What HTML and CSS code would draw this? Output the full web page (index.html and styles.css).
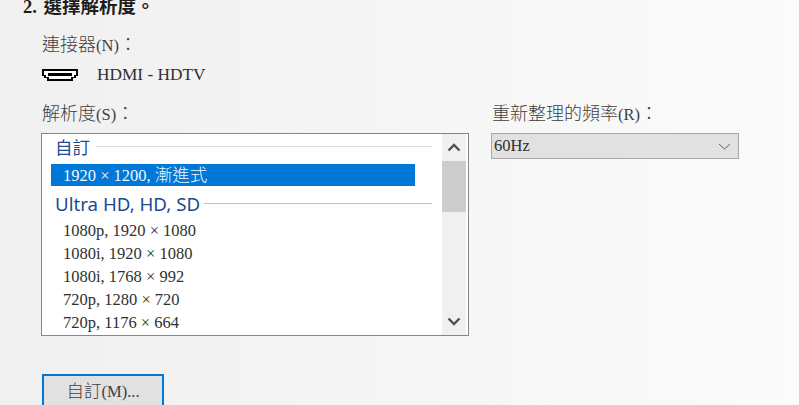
FILE: index.html
```html
<!DOCTYPE html>
<html lang="zh-Hant">
<head>
<meta charset="utf-8">
<title>選擇解析度</title>
<link rel="stylesheet" href="styles.css">
</head>
<body>
<main class="page">
  <h2 class="step">2. 選擇解析度。</h2>
  <div class="section">
    <div class="label">連接器<span class="latin">(N)</span>：</div>
    <div class="connector">
      <svg class="hdmi" width="36" height="12" viewBox="0 0 36 12" aria-hidden="true" shape-rendering="crispEdges">
        <path d="M0 0h36v7h-2v2h-3v3H5V9H2V7H0z" fill="#000"/>
        <path d="M2 2h32v4h-2v2h-3v2H7V8H4V6H2z" fill="#fff"/>
        <path d="M6 4h24v3H6z" fill="#000"/>
      </svg>
      <span>HDMI - HDTV</span>
    </div>
    <div class="columns">
      <div class="col-left">
        <div class="label">解析度<span class="latin">(S)</span>：</div>
        <div class="listbox">
          <div class="list">
            <div class="group first"><span>自訂</span></div>
            <div class="item selected">1920 × 1200, <span class="cjk">漸進式</span></div>
            <div class="group second"><span>Ultra HD, HD, SD</span></div>
            <div class="item">1080p, 1920 × 1080</div>
            <div class="item">1080i, 1920 × 1080</div>
            <div class="item">1080i, 1768 × 992</div>
            <div class="item">720p, 1280 × 720</div>
            <div class="item">720p, 1176 × 664</div>
          </div>
          <div class="scrollbar">
            <div class="arrow">
              <svg width="14" height="9" viewBox="0 0 14 9" aria-hidden="true"><path d="M1.500 7.500L7 2l5.500 5.500" fill="none" stroke="#505050" stroke-width="2.400"/></svg>
            </div>
            <div class="thumb"></div>
            <div class="track"></div>
            <div class="arrow down">
              <svg width="14" height="9" viewBox="0 0 14 9" aria-hidden="true"><path d="M1.500 1.500L7 7l5.500-5.500" fill="none" stroke="#505050" stroke-width="2.400"/></svg>
            </div>
          </div>
        </div>
      </div>
      <div class="col-right">
        <div class="label">重新整理的頻率<span class="latin">(R)</span>：</div>
        <div class="combo">
          <span>60Hz</span>
          <svg width="13" height="7" viewBox="0 0 13 7" aria-hidden="true"><path d="M1 1l5.500 5L12 1" fill="none" stroke="#606060" stroke-width="1"/></svg>
        </div>
      </div>
    </div>
    <button class="button" type="button">自訂<span class="latin">(M)...</span></button>
  </div>
</main>
</body>
</html>
```
FILE: styles.css
```css
html, body {
  margin: 0;
  padding: 0;
  height: 405px;
  overflow: hidden;
  background: #f0f0f0;
}
body {
  font-family: "Liberation Serif", "Noto Sans CJK TC", serif;
  font-size: 17px;
  font-weight: 300;
  color: #303030;
}
.page {
  height: 405px;
  overflow: hidden;
  background: linear-gradient(90deg, #f0f0f0 0, #fbfbfb 100%);
}
.step {
  margin: 0;
  padding-left: 23px;
  height: 13px;
  font-size: 18.500px;
  line-height: 15px;
  font-weight: 700;
  word-spacing: 2px;
  color: #1c1c1c;
}
.section {
  padding: 21px 0 0 42px;
}
.label {
  height: 22px;
  line-height: 22px;
  font-size: 18px;
  color: #404040;
}
.latin {
  font-size: 16.500px;
}
.cjk {
  font-size: 17.500px;
}
.connector {
  display: flex;
  align-items: center;
  height: 22px;
  margin-top: 8px;
  font-size: 17.300px;
  color: #303030;
}
.hdmi {
  flex: none;
  margin-right: 19px;
}
.columns {
  display: flex;
  margin-top: 17px;
  margin-left: -1px;
}
.col-left {
  width: 428px;
  margin-right: 22px;
}
.col-left .label, .col-right .label {
  margin-left: 1px;
}
.listbox {
  display: flex;
  box-sizing: border-box;
  width: 428px;
  height: 203px;
  margin-top: 8px;
  background: #fff;
  border: 1px solid #868686;
  padding-right: 2px;
}
.list {
  flex: 1;
  padding-left: 9px;
  overflow: hidden;
}
.group {
  display: flex;
  align-items: center;
  width: 381px;
  height: 24px;
  font-family: "Noto Sans", "Noto Sans CJK TC", sans-serif;
  font-size: 17.500px;
  font-weight: 400;
  color: #1f4a8c;
}
.group span {
  padding: 0 6px 0 4px;
  white-space: nowrap;
}
.group::after {
  content: "";
  flex: 1;
  height: 1px;
  background: #d8dde6;
}
.group.second {
  margin-top: 1px;
  height: 32px;
  font-size: 18.700px;
}
.group.second span {
  padding-right: 4px;
}
.group.second::after {
  background: #b9c0cc;
}
.item {
  width: 352px;
  padding-left: 12px;
  height: 23px;
  line-height: 23px;
  font-size: 16.500px;
  color: #303030;
  white-space: nowrap;
}
.item.selected {
  height: 22px;
  line-height: 22px;
  margin-top: 6px;
  background: #0078d7;
  color: #f2f7fc;
}
.scrollbar {
  display: flex;
  flex-direction: column;
  width: 24px;
  background: #f0f0f0;
}
.arrow {
  display: flex;
  align-items: center;
  justify-content: center;
  height: 27px;
  flex: none;
}
.thumb {
  height: 51px;
  flex: none;
  background: #cdcdcd;
}
.track {
  flex: 1;
}
.combo {
  display: flex;
  align-items: center;
  justify-content: space-between;
  box-sizing: border-box;
  width: 248px;
  height: 26px;
  margin-top: 8px;
  padding: 0 7px 0 2px;
  background: #e1e1e1;
  border: 1px solid #a8a8a8;
  font-size: 16.500px;
  color: #303030;
}
.button {
  display: block;
  box-sizing: border-box;
  width: 122px;
  height: 36px;
  margin-top: 38px;
  padding: 0 0 6px;
  background: #e1e1e1;
  border: 2px solid #0078d7;
  font-family: inherit;
  font-size: 17.500px;
  font-weight: 300;
  color: #404040;
}
```
